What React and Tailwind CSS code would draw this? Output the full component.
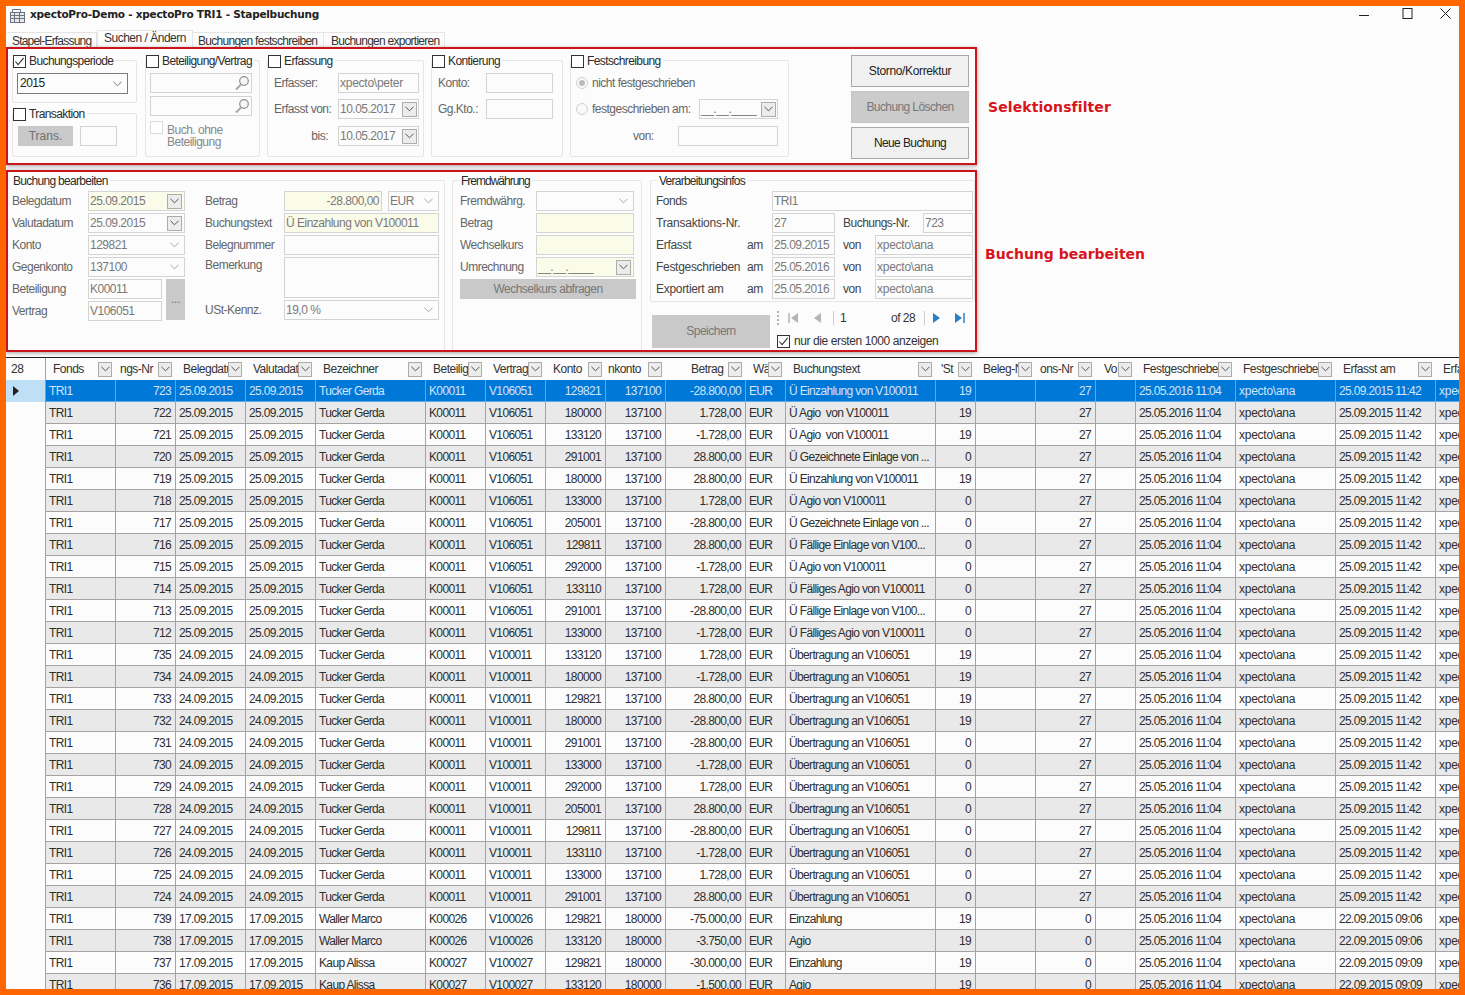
import React from "react";

const Chevron = ({ className = "text-[#9a9a9a]" }) => (
  <svg viewBox="0 0 10 6" className={`w-[9px] h-[6px] shrink-0 ${className}`} fill="none" stroke="currentColor" strokeWidth="1">
    <path d="M0.5 0.5 L5 5 L9.5 0.5" />
  </svg>
);

const DropBtn = ({ size = "w-[15px] h-[15px]" }) => (
  <span className={`${size} shrink-0 flex items-center justify-center border border-[#acacac] bg-[#ececec]`}>
    <Chevron className="text-[#444]" />
  </span>
);

const Box = ({ className = "", children }) => (
  <div className={`h-[20px] shrink-0 border border-[#d4d4d4] flex items-center pl-[1px] text-[#7a7a7a] overflow-hidden whitespace-nowrap ${className}`}>
    {children}
  </div>
);

const Check = ({ checked, light }) => (
  <span className={`w-[13px] h-[13px] shrink-0 border flex items-center justify-center bg-white ${light ? "border-[#dcdcdc]" : "border-[#333]"}`}>
    {checked && (
      <svg viewBox="0 0 12 12" className="w-[11px] h-[11px]" fill="none" stroke="#333" strokeWidth="1.2">
        <path d="M1.5 6 L4.5 9.5 L10.5 2" />
      </svg>
    )}
  </span>
);

const Radio = ({ on }) => (
  <span className="w-[12px] h-[12px] shrink-0 rounded-full border border-[#cfcfcf] bg-[#fafafa] flex items-center justify-center">
    {on && <span className="w-[6px] h-[6px] rounded-full bg-[#bdbdbd]" />}
  </span>
);

const Search = () => (
  <svg viewBox="0 0 16 16" className="w-[16px] h-[16px] shrink-0" fill="none">
    <circle cx="10" cy="6" r="4.3" stroke="#8f8f8f" strokeWidth="1.2" fill="#f6f6f6" />
    <path d="M7 9.5 L2 14.5" stroke="#a8a8a8" strokeWidth="2" />
  </svg>
);

const Legend = ({ children, className = "left-[0px]" }) => (
  <div className={`absolute -top-[7px] ${className} flex items-center gap-[3px] bg-[#fcfcfc] pr-[2px] h-[15px] text-[#2b2b2b] whitespace-nowrap tracking-[-0.6px]`}>
    {children}
  </div>
);

const Group = ({ legend, legendClass, className = "", children }) => (
  <div className={`relative border border-[#e6e6e6] rounded-[2px] shrink-0 ${className}`}>
    <Legend className={legendClass}>{legend}</Legend>
    {children}
  </div>
);

const GRID = "grid grid-cols-[39px_70px_60px_70px_70px_110px_60px_60px_60px_60px_80px_40px_150px_40px_60px_60px_40px_100px_100px_100px_100px]";

const HEAD = [
  ["Fonds", "pl-[7px]"],
  ["ngs-Nr", "pl-[5px]"],
  ["Belegdatum", "pl-[8px]"],
  ["Valutadatum", "pl-[8px]"],
  ["Bezeichner", "pl-[8px]"],
  ["Beteiligung", "pl-[8px]"],
  ["Vertrag", "pl-[8px]"],
  ["Konto", "pl-[8px]"],
  ["nkonto", "pl-[3px]"],
  ["Betrag", "pl-[26px]"],
  ["Wä", "pl-[8px]"],
  ["Buchungstext", "pl-[8px]"],
  ["'St", "pl-[6px]"],
  ["Beleg-Nr", "pl-[8px]"],
  ["ons-Nr", "pl-[5px]"],
  ["Vo", "pl-[9px]"],
  ["Festgeschrieben", "pl-[8px]"],
  ["Festgeschrieben", "pl-[8px]"],
  ["Erfasst am", "pl-[8px]"],
];

const A = ["Tucker Gerda", "K00011", "V106051", "25.09.2015"];
const B = ["Tucker Gerda", "K00011", "V100011", "24.09.2015"];
const U = "Übertragung an V106051";
const E1 = "25.09.2015 11:42";
const rows = [
  [723, A, "129821", "137100", "-28.800,00", "Ü Einzahlung von V100011", 19, 27, E1],
  [722, A, "180000", "137100", "1.728,00", "Ü Agio  von V100011", 19, 27, E1],
  [721, A, "133120", "137100", "-1.728,00", "Ü Agio  von V100011", 19, 27, E1],
  [720, A, "291001", "137100", "28.800,00", "Ü Gezeichnete Einlage von ...", 0, 27, E1],
  [719, A, "180000", "137100", "28.800,00", "Ü Einzahlung von V100011", 19, 27, E1],
  [718, A, "133000", "137100", "1.728,00", "Ü Agio von V100011", 0, 27, E1],
  [717, A, "205001", "137100", "-28.800,00", "Ü Gezeichnete Einlage von ...", 0, 27, E1],
  [716, A, "129811", "137100", "28.800,00", "Ü Fällige Einlage von V100...", 0, 27, E1],
  [715, A, "292000", "137100", "-1.728,00", "Ü Agio von V100011", 0, 27, E1],
  [714, A, "133110", "137100", "1.728,00", "Ü Fälliges Agio von V100011", 0, 27, E1],
  [713, A, "291001", "137100", "-28.800,00", "Ü Fällige Einlage von V100...", 0, 27, E1],
  [712, A, "133000", "137100", "-1.728,00", "Ü Fälliges Agio von V100011", 0, 27, E1],
  [735, B, "133120", "137100", "1.728,00", U, 19, 27, E1],
  [734, B, "180000", "137100", "-1.728,00", U, 19, 27, E1],
  [733, B, "129821", "137100", "28.800,00", U, 19, 27, E1],
  [732, B, "180000", "137100", "-28.800,00", U, 19, 27, E1],
  [731, B, "291001", "137100", "-28.800,00", U, 0, 27, E1],
  [730, B, "133000", "137100", "-1.728,00", U, 0, 27, E1],
  [729, B, "292000", "137100", "1.728,00", U, 0, 27, E1],
  [728, B, "205001", "137100", "28.800,00", U, 0, 27, E1],
  [727, B, "129811", "137100", "-28.800,00", U, 0, 27, E1],
  [726, B, "133110", "137100", "-1.728,00", U, 0, 27, E1],
  [725, B, "133000", "137100", "1.728,00", U, 0, 27, E1],
  [724, B, "291001", "137100", "28.800,00", U, 0, 27, E1],
  [739, ["Waller Marco", "K00026", "V100026", "17.09.2015"], "129821", "180000", "-75.000,00", "Einzahlung", 19, 0, "22.09.2015 09:06"],
  [738, ["Waller Marco", "K00026", "V100026", "17.09.2015"], "133120", "180000", "-3.750,00", "Agio", 19, 0, "22.09.2015 09:06"],
  [737, ["Kaup Alissa", "K00027", "V100027", "17.09.2015"], "129821", "180000", "-30.000,00", "Einzahlung", 19, 0, "22.09.2015 09:09"],
  [736, ["Kaup Alissa", "K00027", "V100027", "17.09.2015"], "133120", "180000", "-1.500,00", "Agio", 19, 0, "22.09.2015 09:09"],
];

const Cell = ({ right, sel, loose, children }) => (
  <div className={`h-[22px] border-l border-b leading-[23px] whitespace-pre overflow-hidden ${right ? "text-right pr-[4px]" : "pl-[3px]"} ${loose ? "tracking-[-0.25px]" : ""} ${sel ? "border-[#5aa9e6]" : "border-[#a3a3a3]"}`}>
    {children}
  </div>
);

const Row = ({ r, i }) => {
  const [nr, [bez, bet, ver, date], konto, gk, betrag, text, st, tx, erf] = r;
  const sel = i === 0;
  const cells = [
    ["TRI1"], [nr, 1], [date], [date], [bez], [bet], [ver], [konto, 1], [gk, 1], [betrag, 1], ["EUR"], [text], [st, 1], ["", 1], [tx, 1], [""],
    ["25.05.2016 11:04"], ["xpecto\\ana", 0, 1], [erf], ["xpecto\\ana", 0, 1],
  ];
  return (
    <div className={`${GRID} tracking-[-0.65px] ${sel ? "bg-[#0078d7] text-[#cfe6fb]" : i % 2 ? "bg-[#e9e9e9] text-[#2e2e2e]" : "bg-[#fcfcfc] text-[#2e2e2e]"}`}>
      <div className={`h-[22px] flex items-center pl-[7px] ${sel ? "bg-[#bfdff7]" : "bg-[#fcfcfc]"}`}>
        {sel && (
          <svg viewBox="0 0 6 10" className="w-[6px] h-[10px]"><path d="M0 0 L6 5 L0 10 Z" fill="#222" /></svg>
        )}
      </div>
      {cells.map(([v, right, loose], k) => (
        <Cell key={k} right={right} loose={loose} sel={sel}>{v}</Cell>
      ))}
    </div>
  );
};

const Label = ({ w, className = "text-[#666]", children }) => (
  <span className={`${w} shrink-0 whitespace-nowrap ${className}`}>{children}</span>
);

const Field = ({ label, children, dark }) => (
  <div className="flex items-center h-[20px]">
    <Label w="w-[76px]" className={dark ? "text-[#444]" : "text-[#666]"}>{label}</Label>
    {children}
  </div>
);

const YELLOW = "bg-[#fbfbe9]";

const PagerIcon = ({ d, fill, bar }) => (
  <svg viewBox="0 0 10 12" className="w-[10px] h-[12px] shrink-0">
    <path d={d} fill={fill} />
    {bar && <path d={bar} stroke={fill} strokeWidth="1.5" fill="none" />}
  </svg>
);

const ActionButton = ({ className = "", children }) => (
  <div className={`w-[118px] border flex items-center justify-center ${className}`}>{children}</div>
);

const FxRow = ({ label, date, von }) => (
  <div className="flex items-center h-[20px]">
    <Label w="w-[91px]" className="text-[#444] tracking-[-0.3px]">{label}</Label>
    <Label w="w-[25px]" className="text-[#444]">am</Label>
    <Box className="w-[63px]">{date}</Box>
    <Label w="w-[32px] ml-[8px]" className="text-[#444]">von</Label>
    <Box className="w-[98px] tracking-[-0.25px]">{von}</Box>
  </div>
);

export default function App() {
  return (
    <div className="w-[1465px] h-[995px] overflow-hidden border-[6px] border-[#ff6600] bg-[#fcfcfc] font-['Liberation_Sans',Arial,sans-serif] text-[12px] tracking-[-0.5px] text-[#333] leading-[15px]">
      {/* Title bar */}
      <div className="h-[24px] flex items-center pl-[3px] pr-[8px]">
        <svg viewBox="0 0 16 14" className="w-[16px] h-[14px] shrink-0 -mt-[5px]" fill="none" stroke="#6b7280" strokeWidth="1">
          <rect x="1.5" y="3.5" width="14" height="10" fill="#e5e7eb" />
          <path d="M1.5 6.5 H15.5 M1.5 9.5 H15.5 M5.5 3.5 V13.5 M10.5 3.5 V13.5" />
          <path d="M3.5 3.5 V0.5 H11.5 V3.5" />
        </svg>
        <span className="ml-[5px] font-['DejaVu_Sans',sans-serif] font-bold text-[10.5px] tracking-[-0.25px] text-[#222] -mt-[7px] whitespace-nowrap">xpectoPro-Demo - xpectoPro TRI1 - Stapelbuchung</span>
        <div className="ml-auto flex items-center -mt-[10px]">
          <svg viewBox="0 0 10 10" className="w-[10px] h-[10px]" fill="none" stroke="#222"><path d="M0 7.5 H10" /></svg>
          <svg viewBox="0 0 11 11" className="w-[11px] h-[11px] ml-[33px]" fill="none" stroke="#222"><rect x="1" y="0.5" width="9" height="10" /></svg>
          <svg viewBox="0 0 11 11" className="w-[11px] h-[11px] ml-[27px]" fill="none" stroke="#222"><path d="M0.5 0.5 L10.5 10.5 M10.5 0.5 L0.5 10.5" /></svg>
        </div>
      </div>

      {/* Tabs */}
      <div className="h-[17px] flex items-end pl-[1px]">
        <div className="h-[15px] w-[90px] pl-[5px] border-t border-r border-[#e4e4e4] leading-[17px] whitespace-nowrap tracking-[-0.8px]">Stapel-Erfassung</div>
        <div className="h-[17px] w-[96px] pl-[6px] border-x border-t border-[#e4e4e4] leading-[15px] whitespace-nowrap">Suchen / Ändern</div>
        <div className="h-[15px] w-[131px] pl-[5px] border-t border-r border-[#e4e4e4] leading-[17px] whitespace-nowrap tracking-[-0.7px]">Buchungen festschreiben</div>
        <div className="h-[15px] w-[121px] pl-[7px] border-t border-r border-[#e4e4e4] leading-[17px] whitespace-nowrap tracking-[-0.75px]">Buchungen exportieren</div>
      </div>

      {/* Selektionsfilter */}
      <div className="flex items-center">
        <div className="w-[971px] h-[118px] border-2 border-[#c9151b] shadow-[0_1px_4px_rgba(120,120,120,0.7)] flex items-start pl-[4px] shrink-0">
          <div className="flex flex-col mt-[11px] w-[125px] shrink-0">
            <Group className="h-[43px]" legend={<><Check checked /><span>Buchungsperiode</span></>}>
              <div className="ml-[4px] mt-[12px] w-[111px] h-[21px] border border-[#7a7a7a] flex items-center justify-between pl-[2px] pr-[5px] text-[#222]">2015<Chevron className="text-[#666]" /></div>
            </Group>
            <Group className="h-[44px] mt-[10px]" legend={<><Check /><span>Transaktion</span></>}>
              <div className="flex items-center ml-[5px] mt-[12px] gap-[7px]">
                <div className="w-[55px] h-[20px] bg-[#c9c9c9] flex items-center justify-center text-[#6f6f6f] tracking-[0px]">Trans.</div>
                <Box className="w-[37px]" />
              </div>
            </Group>
          </div>

          <Group className="w-[115px] h-[97px] mt-[11px] ml-[8px]" legend={<><Check /><span>Beteiligung/Vertrag</span></>}>
            <div className="flex flex-col gap-[3px] mt-[12px] ml-[4px]">
              <Box className="w-[102px] justify-end pr-[1px]"><Search /></Box>
              <Box className="w-[102px] justify-end pr-[1px]"><Search /></Box>
            </div>
            <div className="flex ml-[4px] mt-[5px] gap-[4px]">
              <Check light />
              <span className="text-[#888] leading-[12px] mt-[3px]">Buch. ohne<br />Beteiligung</span>
            </div>
          </Group>

          <Group className="w-[157px] h-[97px] mt-[11px] ml-[7px]" legend={<><Check /><span>Erfassung</span></>}>
            <div className="flex flex-col mt-[12px] pl-[6px]">
              <div className="flex items-center h-[20px]"><Label w="w-[64px]">Erfasser:</Label><Box className="w-[81px] tracking-[-0.25px]">xpecto\peter</Box></div>
              <div className="flex items-center h-[20px] mt-[6px]"><Label w="w-[64px]">Erfasst von:</Label><Box className="w-[81px] justify-between pr-[1px]">10.05.2017<DropBtn /></Box></div>
              <div className="flex items-center h-[20px] mt-[7px]"><Label w="w-[64px]" className="text-[#666] text-right pr-[10px]">bis:</Label><Box className="w-[81px] justify-between pr-[1px]">10.05.2017<DropBtn /></Box></div>
            </div>
          </Group>

          <Group className="w-[132px] h-[97px] mt-[11px] ml-[7px]" legend={<><Check /><span>Kontierung</span></>}>
            <div className="flex flex-col gap-[6px] mt-[12px] pl-[6px]">
              <div className="flex items-center"><Label w="w-[48px]">Konto:</Label><Box className="w-[67px]" /></div>
              <div className="flex items-center"><Label w="w-[48px]">Gg.Kto.:</Label><Box className="w-[67px]" /></div>
            </div>
          </Group>

          <Group className="w-[219px] h-[97px] mt-[11px] ml-[7px]" legend={<><Check /><span>Festschreibung</span></>}>
            <div className="flex flex-col mt-[12px] pl-[5px]">
              <div className="flex items-center h-[20px] gap-[4px] text-[#666]"><Radio on />nicht festgeschrieben</div>
              <div className="flex items-center h-[20px] mt-[6px] text-[#666]">
                <Radio /><span className="w-[111px] shrink-0 pl-[4px] whitespace-nowrap">festgeschrieben am:</span>
                <Box className="w-[79px] justify-between pr-[1px]">__.__.____<DropBtn /></Box>
              </div>
              <div className="flex items-center h-[20px] mt-[7px] text-[#666]"><span className="w-[102px] pl-[57px] shrink-0 whitespace-nowrap">von:</span><Box className="w-[100px]" /></div>
            </div>
          </Group>

          <div className="flex flex-col gap-[4px] mt-[6px] ml-[62px] w-[118px] shrink-0">
            <ActionButton className="h-[32px] bg-[#f0f0f0] border-[#a8a8a8] text-[#222] tracking-[-0.35px]">Storno/Korrektur</ActionButton>
            <ActionButton className="h-[32px] bg-[#cbcbcb] border-[#c4c4c4] text-[#777] tracking-[-0.6px]">Buchung Löschen</ActionButton>
            <ActionButton className="h-[32px] bg-[#f0f0f0] border-[#a8a8a8] text-[#222] tracking-[-0.6px]">Neue Buchung</ActionButton>
          </div>
        </div>
        <div className="ml-[11px] mt-[2px] font-['DejaVu_Sans',sans-serif] font-bold text-[14px] tracking-[0.1px] text-[#d8141c] whitespace-nowrap">Selektionsfilter</div>
      </div>

      {/* Buchung bearbeiten */}
      <div className="flex items-center mt-[5px]">
        <div className="w-[971px] h-[182px] border-2 border-[#c9151b] shadow-[0_1px_4px_rgba(120,120,120,0.7)] flex items-start shrink-0 overflow-hidden">
          <Group className="w-[437px] h-[178px] mt-[8px] border-l-0" legendClass="left-[2px]" legend={<span className="pl-[3px] tracking-[-0.7px]">Buchung bearbeiten</span>}>
            <div className="flex pt-[10px] pl-[4px]">
              <div className="flex flex-col gap-[2px] w-[173px] shrink-0">
                <Field label="Belegdatum"><Box className={`w-[97px] justify-between pr-[2px] ${YELLOW}`}>25.09.2015<DropBtn /></Box></Field>
                <Field label="Valutadatum"><Box className="w-[97px] justify-between pr-[2px]">25.09.2015<DropBtn /></Box></Field>
                <Field label="Konto"><Box className="w-[97px] justify-between pr-[5px]">129821<Chevron /></Box></Field>
                <Field label="Gegenkonto"><Box className="w-[97px] justify-between pr-[5px]">137100<Chevron /></Box></Field>
                <div className="flex">
                  <div className="flex flex-col gap-[2px]">
                    <div className="flex items-center h-[20px]"><Label w="w-[76px]">Beteiligung</Label><Box className="w-[74px]">K00011</Box></div>
                    <div className="flex items-center h-[20px]"><Label w="w-[76px]">Vertrag</Label><Box className="w-[74px]">V106051</Box></div>
                  </div>
                  <div className="ml-[4px] w-[20px] h-[41px] bg-[#c9c9c9] text-[#777] flex items-center justify-center">...</div>
                </div>
              </div>
              <div className="flex flex-col gap-[2px] ml-[20px] shrink-0">
                <div className="flex items-center h-[20px]">
                  <Label w="w-[79px]">Betrag</Label>
                  <Box className={`w-[98px] justify-end pr-[2px] ${YELLOW}`}>-28.800,00</Box>
                  <Box className="w-[51px] ml-[6px] justify-between pr-[5px]">EUR<Chevron /></Box>
                </div>
                <div className="flex items-center h-[20px]"><Label w="w-[79px]">Buchungstext</Label><Box className={`w-[155px] ${YELLOW}`}>Ü Einzahlung von V100011</Box></div>
                <div className="flex items-center h-[20px]"><Label w="w-[79px]">Belegnummer</Label><Box className="w-[155px]" /></div>
                <div className="flex items-start h-[41px]"><Label w="w-[79px] pt-[1px]">Bemerkung</Label><Box className="w-[155px] h-[41px]" /></div>
                <div className="flex items-center h-[20px]"><Label w="w-[79px]">USt-Kennz.</Label><Box className="w-[155px] justify-between pr-[5px]">19,0 %<Chevron /></Box></div>
              </div>
            </div>
          </Group>

          <Group className="w-[190px] h-[178px] mt-[8px] ml-[7px]" legendClass="left-[7px]" legend={<span className="pl-[1px] tracking-[-1px]">Fremdwährung</span>}>
            <div className="flex flex-col gap-[2px] pt-[10px] pl-[7px]">
              <Field label="Fremdwährg."><Box className="w-[98px] justify-end pr-[5px]"><Chevron /></Box></Field>
              <Field label="Betrag"><Box className={`w-[98px] ${YELLOW}`} /></Field>
              <Field label="Wechselkurs"><Box className={`w-[98px] ${YELLOW}`} /></Field>
              <Field label="Umrechnung"><Box className={`w-[98px] justify-between pr-[2px] ${YELLOW}`}>__.__.____<DropBtn /></Box></Field>
              <div className="w-[176px] h-[20px] bg-[#c9c9c9] text-[#777] flex items-center justify-center">Wechselkurs abfragen</div>
            </div>
          </Group>

          <div className="flex flex-col ml-[8px] w-[325px] shrink-0 mt-[8px]">
            <Group className="h-[122px]" legendClass="left-[7px]" legend={<span className="pl-[1px] tracking-[-0.75px]">Verarbeitungsinfos</span>}>
              <div className="flex flex-col gap-[2px] pt-[10px] pl-[5px]">
                <div className="flex items-center h-[20px]"><Label w="w-[116px]" className="text-[#444]">Fonds</Label><Box className="w-[201px]">TRI1</Box></div>
                <div className="flex items-center h-[20px]">
                  <Label w="w-[116px]" className="text-[#444] tracking-[-0.2px]">Transaktions-Nr.</Label><Box className="w-[63px]">27</Box>
                  <Label w="w-[80px] ml-[8px]" className="text-[#444]">Buchungs-Nr.</Label><Box className="w-[50px]">723</Box>
                </div>
                <FxRow label="Erfasst" date="25.09.2015" von="xpecto\ana" />
                <FxRow label="Festgeschrieben" date="25.05.2016" von="xpecto\ana" />
                <FxRow label="Exportiert am" date="25.05.2016" von="xpecto\ana" />
              </div>
            </Group>
            <div className="flex items-start mt-[8px] pl-[2px]">
              <div className="w-[118px] h-[33px] mt-[5px] bg-[#c9c9c9] text-[#777] flex items-center justify-center shrink-0">Speichern</div>
              <div className="ml-[7px] flex flex-col">
                <div className="flex items-center h-[16px] w-[195px]">
                  <span className="w-[2px] h-[14px] border-l-2 border-dotted border-[#b0b0b0] shrink-0" />
                  <span className="ml-[9px]"><PagerIcon d="M10 1 L3 6 L10 11 Z" fill="#b5b5b5" bar="M1 1 V11" /></span>
                  <span className="ml-[14px]"><PagerIcon d="M9 1 L2 6 L9 11 Z" fill="#b5b5b5" /></span>
                  <span className="ml-[11px] w-px h-[14px] bg-[#cfcfcf] shrink-0" />
                  <span className="ml-[6px] w-[51px] shrink-0">1</span>
                  <span className="w-[33px] shrink-0 text-[#333]">of 28</span>
                  <span className="w-px h-[14px] bg-[#cfcfcf] shrink-0" />
                  <span className="ml-[7px]"><PagerIcon d="M1 1 L8 6 L1 11 Z" fill="#2a7fc9" /></span>
                  <span className="ml-[13px]"><PagerIcon d="M0 1 L7 6 L0 11 Z" fill="#2a7fc9" bar="M9 1 V11" /></span>
                </div>
                <div className="flex items-center gap-[4px] mt-[8px] whitespace-nowrap text-[#333] tracking-[-0.4px]"><Check checked />nur die ersten 1000 anzeigen</div>
              </div>
            </div>
          </div>
        </div>
        <div className="ml-[8px] -mt-[14px] font-['DejaVu_Sans',sans-serif] font-bold text-[14px] tracking-[0px] text-[#d8141c] whitespace-nowrap">Buchung bearbeiten</div>
      </div>

      {/* Data grid */}
      <div className="mt-[5px] border-t border-[#222] overflow-hidden">
        <div className={`${GRID} bg-[#fcfcfc] text-[#333] h-[22px]`}>
          <div className="h-[22px] leading-[22px] pl-[5px]">28</div>
          {HEAD.map(([t, pad], i) => (
            <div key={i} className={`h-[22px] flex items-center pr-[3px] ${i === 0 ? "border-l border-[#a3a3a3]" : ""} ${pad}`}>
              <span className="flex-1 min-w-0 overflow-hidden whitespace-nowrap">{t}</span>
              <DropBtn size="w-[14px] h-[15px]" />
            </div>
          ))}
          <div className="h-[22px] leading-[22px] pl-[8px] overflow-hidden whitespace-nowrap">Erfasst von</div>
        </div>
        {rows.map((r, i) => <Row key={r[0]} r={r} i={i} />)}
      </div>
    </div>
  );
}
